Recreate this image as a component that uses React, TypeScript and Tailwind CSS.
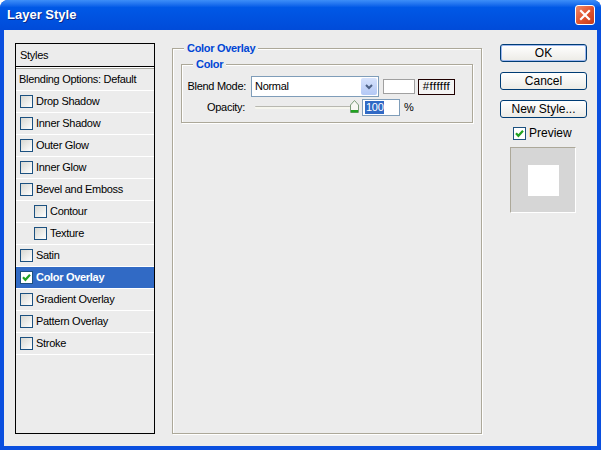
import React from "react";

type Effect = {
  label: string;
  sub?: boolean;
  checked?: boolean;
  active?: boolean;
};

const effects: Effect[] = [
  { label: "Drop Shadow" },
  { label: "Inner Shadow" },
  { label: "Outer Glow" },
  { label: "Inner Glow" },
  { label: "Bevel and Emboss" },
  { label: "Contour", sub: true },
  { label: "Texture", sub: true },
  { label: "Satin" },
  { label: "Color Overlay", checked: true, active: true },
  { label: "Gradient Overlay" },
  { label: "Pattern Overlay" },
  { label: "Stroke" },
];

const CheckBox: React.FC<{ checked?: boolean; light?: boolean }> = ({ checked, light }) => (
  <span
    className={`w-[13px] h-[13px] shrink-0 border border-[#1c5180] flex items-center justify-center ${
      light ? "bg-white" : "bg-linear-to-br from-[#d8d8d2] to-white"
    }`}
  >
    {checked && (
      <svg viewBox="0 0 9 9" className="w-[9px] h-[9px]">
        <path d="M1 4.2 L3.4 6.8 L8 1.8" stroke="#21a121" strokeWidth="2.2" fill="none" />
      </svg>
    )}
  </span>
);

const Button: React.FC<{ label: string; primary?: boolean }> = ({ label, primary }) => (
  <button
    className={`w-[87px] h-[18px] rounded-[3px] border border-[#003c74] bg-linear-to-b from-white to-[#ecebe6] text-[12px] leading-none text-black flex items-center justify-center ${
      primary ? "shadow-[inset_0_0_0_1px_#9cb7ef]" : ""
    }`}
  >
    {label}
  </button>
);

const Slider = () => (
  <div className="relative w-[104px] h-[15px] flex items-center">
    <div className="w-full h-[3px] border-t border-[#b8b8b0] bg-[#f6f6ee] rounded-[1px]" />
    {/* thumb sits on the right end of the track */}
    <svg viewBox="0 0 9 13" className="absolute right-0 top-[0px] w-[9px] h-[13px]">
      <path d="M0.5 5 L4.5 0.5 L8.5 5 L8.5 12.5 L0.5 12.5 Z" fill="#f7f7f4" stroke="#7a9a7a" />
      <rect x="1" y="10" width="7" height="2.5" fill="#21a121" />
    </svg>
  </div>
);

export default function App() {
  return (
    <div className="w-[601px] h-[450px] bg-white font-['Liberation_Sans',Arial,sans-serif] text-[11px] text-black">
      <div className="w-full h-full flex flex-col rounded-t-[8px] overflow-hidden bg-[#0a4fdf]">
        {/* title bar */}
        <div className="h-[30px] shrink-0 flex items-center justify-between pl-[7px] pr-[6px] bg-linear-to-b from-[#3d8ef8] via-[#0058e6] via-25% to-[#004bd9]">
          <span className="text-white font-bold text-[13px] [text-shadow:1px_1px_0_#0a2a8a]">
            Layer Style
          </span>
          <span className="w-[20px] h-[20px] rounded-[3px] border border-white bg-linear-to-br from-[#ee8a6a] via-[#e2552f] to-[#c43a1a] flex items-center justify-center">
            <svg viewBox="0 0 12 12" className="w-[12px] h-[12px]">
              <path d="M2 2 L10 10 M10 2 L2 10" stroke="white" strokeWidth="2.2" strokeLinecap="square" />
            </svg>
          </span>
        </div>

        {/* dialog body */}
        <div className="flex-1 mx-[4px] mb-[4px] bg-[#ececec] flex items-start pl-[11px] pt-[12px] tracking-[-0.3px]">
          {/* styles list */}
          <div className="mt-[1px] w-[140px] h-[391px] border border-black flex flex-col">
            <div className="h-[22px] shrink-0 flex items-center pl-[4px]">Styles</div>
            <div className="h-[3px] shrink-0 border-t border-black bg-white border-b border-b-[#a8a8a0]" />
            <div className="h-[22px] shrink-0 flex items-center pl-[3px] border-b border-white">
              Blending Options: Default
            </div>
            {effects.map((e) => (
              <div
                key={e.label}
                className={`h-[22px] shrink-0 flex items-center gap-[3px] border-b border-white ${
                  e.sub ? "pl-[18px]" : "pl-[4px]"
                } ${e.active ? "bg-[#316ac5] text-white font-bold" : ""}`}
              >
                <CheckBox checked={e.checked} light={e.active} />
                <span>{e.label}</span>
              </div>
            ))}
          </div>

          {/* settings panel */}
          <fieldset className="ml-[17px] w-[310px] h-[392px] border border-[#aca899] shadow-[1px_1px_0_white,inset_1px_1px_0_white]">
            <legend className="ml-[11px] px-[3px] text-[#0046d5] font-bold leading-[12px] bg-[#ececec]">
              Color Overlay
            </legend>
            <div className="pl-[8px] pt-[4px]">
              <fieldset className="w-[292px] border border-[#aca899] shadow-[1px_1px_0_white,inset_1px_1px_0_white]">
                <legend className="ml-[11px] px-[3px] text-[#0046d5] font-bold leading-[12px] bg-[#ececec]">
                  Color
                </legend>
                <div className="pt-[6px] pb-[6px] flex flex-col gap-[2px]">
                  <div className="flex items-center h-[21px]">
                    <span className="w-[64px] text-right">Blend Mode:</span>
                    <div className="ml-[5px] w-[128px] h-[21px] border border-[#7f9db9] bg-white flex items-center justify-between">
                      <span className="pl-[3px]">Normal</span>
                      <span className="mr-[1px] w-[16px] h-[17px] rounded-[2px] bg-linear-to-b from-[#d6e2fc] to-[#b3c8f5] flex items-center justify-center">
                        <svg viewBox="0 0 8 6" className="w-[8px] h-[6px]">
                          <path d="M1 1 L4 4 L7 1" stroke="#4d6185" strokeWidth="2" fill="none" />
                        </svg>
                      </span>
                    </div>
                    <span className="ml-[4px] w-[32px] h-[15px] border border-[#a0a0a0] bg-white" />
                    <span className="ml-[3px] w-[37px] h-[16px] border border-[#200000] bg-[#f4f4f4] flex items-center justify-center leading-none text-[11.5px] tracking-[0.4px]">
                      #ffffff
                    </span>
                  </div>
                  <div className="flex items-center h-[17px]">
                    <span className="w-[63px] text-right">Opacity:</span>
                    <div className="ml-[10px]">
                      <Slider />
                    </div>
                    <span className="ml-[3px] w-[38px] h-[17px] border border-[#7f9db9] bg-white flex items-center pl-[2px]">
                      <span className="bg-[#316ac5] text-white leading-[13px] px-[1px]">100</span>
                    </span>
                    <span className="ml-[4px]">%</span>
                  </div>
                </div>
              </fieldset>
            </div>
          </fieldset>

          {/* buttons and preview */}
          <div className="ml-[18px] mt-[2px] w-[87px] flex flex-col tracking-normal">
            <div className="flex flex-col gap-[10px]">
              <Button label="OK" primary />
              <Button label="Cancel" />
              <Button label="New Style..." />
            </div>
            <div className="mt-[6px] ml-[13px] flex items-center gap-[3px] text-[12px]">
              <CheckBox checked light />
              <span>Preview</span>
            </div>
            <div className="mt-[5px] ml-[10px] w-[66px] h-[66px] border border-[#aca899] border-r-white border-b-white bg-[#d6d6d6] flex items-center justify-center">
              <div className="w-[31px] h-[31px] bg-white" />
            </div>
          </div>
        </div>
      </div>
    </div>
  );
}
